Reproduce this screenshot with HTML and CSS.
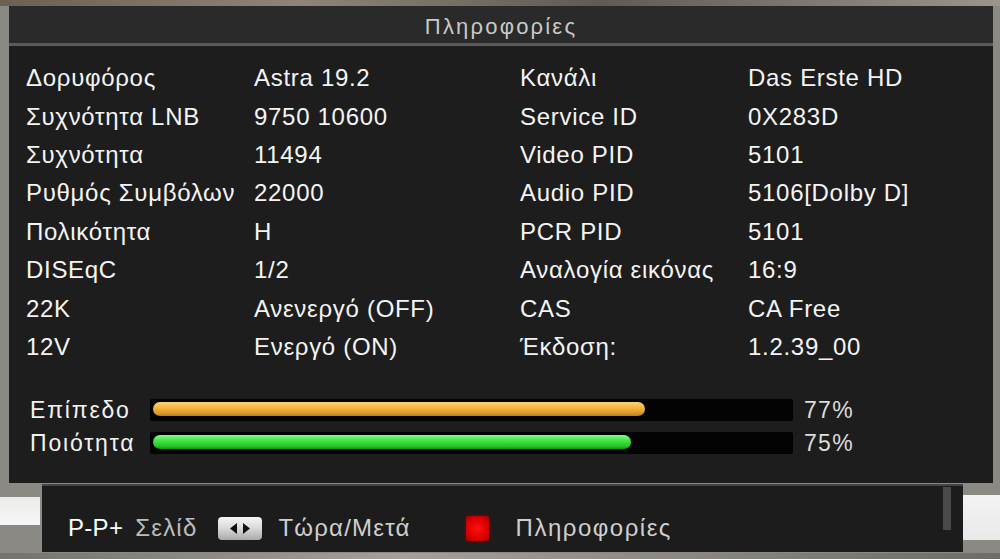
FILE: index.html
```html
<!DOCTYPE html>
<html lang="el">
<head>
<meta charset="utf-8">
<title>Πληροφορίες</title>
<link rel="stylesheet" href="styles.css">
</head>
<body>
<div class="screen">
  <div class="panel">
    <div class="title">Πληροφορίες</div>
    <div class="info">
      <span>Δορυφόρος</span><span>Astra 19.2</span><span>Κανάλι</span><span>Das Erste HD</span>
      <span>Συχνότητα LNB</span><span>9750 10600</span><span>Service ID</span><span>0X283D</span>
      <span>Συχνότητα</span><span>11494</span><span>Video PID</span><span>5101</span>
      <span>Ρυθμός Συμβόλων</span><span>22000</span><span>Audio PID</span><span>5106[Dolby D]</span>
      <span>Πολικότητα</span><span>H</span><span>PCR PID</span><span>5101</span>
      <span>DISEqC</span><span>1/2</span><span>Αναλογία εικόνας</span><span>16:9</span>
      <span>22K</span><span>Ανενεργό (OFF)</span><span>CAS</span><span>CA Free</span>
      <span>12V</span><span>Ενεργό (ON)</span><span>Έκδοση:</span><span>1.2.39_00</span>
    </div>
    <div class="signal">
      <div class="sig-row">
        <span class="sig-label">Επίπεδο</span>
        <div class="track"><div class="fill fill-level" style="width:77.2%"></div></div>
        <span class="pct">77%</span>
      </div>
      <div class="sig-row">
        <span class="sig-label">Ποιότητα</span>
        <div class="track"><div class="fill fill-quality" style="width:75%"></div></div>
        <span class="pct">75%</span>
      </div>
    </div>
  </div>
  <div class="footer">
    <span class="key">P-P+</span>
    <span class="hint hint-page">Σελίδ</span>
    <span class="arrows">
      <svg width="44" height="23" viewBox="0 0 44 23"><path d="M19 6 L12 11.5 L19 17 Z" fill="#111"/><path d="M25 6 L32 11.5 L25 17 Z" fill="#111"/></svg>
    </span>
    <span class="hint hint-now">Τώρα/Μετά</span>
    <span class="red-key"></span>
    <span class="hint hint-info">Πληροφορίες</span>
    <span class="scrollbar"></span>
  </div>
</div>
</body>
</html>
```
FILE: styles.css
```css
html, body {
  margin: 0;
  padding: 0;
}
body {
  width: 1000px;
  height: 559px;
  overflow: hidden;
  font-family: "Liberation Sans", Arial, sans-serif;
  background-color: #8b8984;
  background-image:
    linear-gradient(#ecebea, #f6f6f6),
    linear-gradient(#f3f3f3, #e9e9e9),
    linear-gradient(90deg, #75736e, #a3a09a 40%, #6e6c68),
    linear-gradient(90deg, #6d5f52, #8e8578 30%, #5f5a55 60%, #9a948c);
  background-repeat: no-repeat;
  background-size: 40px 28px, 37px 45px, 1000px 6px, 1000px 6px;
  background-position: 0 497px, 963px 495px, 0 553px, 0 0;
}
.screen {
  padding-top: 6px;
}
.panel {
  margin-left: 9px;
  width: 984px;
  height: 477px;
  background: #1d1d1d;
}
.title {
  height: 37px;
  line-height: 41px;
  background: #2a2a2a;
  border-bottom: 3px solid #5a5a5a;
  text-align: center;
  color: #c9c9c9;
  font-size: 22px;
  letter-spacing: 2.2px;
}
.info {
  display: grid;
  grid-template-columns: 228px 266px 228px 1fr;
  grid-auto-rows: 38.4px;
  align-items: center;
  padding: 13px 0 0 17px;
  color: #f4f4f4;
  font-size: 24px;
  letter-spacing: 0.7px;
}
.signal {
  margin-top: 33px;
  padding-left: 21px;
  display: flex;
  flex-direction: column;
  gap: 11px;
}
.sig-row {
  display: flex;
  align-items: center;
  height: 22px;
}
.sig-label {
  width: 120px;
  color: #f2f2f2;
  font-size: 23px;
  letter-spacing: 1.8px;
}
.track {
  width: 637px;
  height: 16px;
  padding: 3px;
  background: #030303;
  border-radius: 2px;
}
.fill {
  height: 14px;
  border-radius: 7px;
}
.fill-level {
  background: linear-gradient(#ffd27a, #f2b23c 45%, #d99a2a 80%, #b47c1c);
}
.fill-quality {
  background: linear-gradient(#7dff7d, #3fe03f 45%, #28c428 80%, #1a8f1a);
}
.pct {
  margin-left: 11px;
  color: #dcdcdc;
  font-size: 23px;
  letter-spacing: 1.3px;
}
.footer {
  position: relative;
  margin-left: 42px;
  width: 921px;
  height: 48px;
  margin-top: 1px;
  padding-top: 18px;
  border-top: 2px solid #454545;
  background: #1c1c1c;
  display: flex;
  align-items: center;
  color: #cfcfcf;
  font-size: 24px;
}
.key {
  margin-left: 26px;
  color: #ffffff;
  letter-spacing: 0.3px;
}
.hint-page {
  margin-left: 12px;
  color: #bdbdbd;
  letter-spacing: 1.2px;
}
.arrows {
  margin-left: 21px;
  width: 44px;
  height: 23px;
  border-radius: 4px;
  background: linear-gradient(#f6f6f6, #d8d8d8 50%, #a9a9a9);
  display: flex;
}
.hint-now {
  margin-left: 16px;
  letter-spacing: 1.2px;
}
.red-key {
  margin-left: 55px;
  width: 23px;
  height: 25px;
  border-radius: 2px;
  background: radial-gradient(circle at 50% 50%, #ff1010, #e00000 55%, #a00000);
  box-shadow: 0 0 3px #900000;
}
.hint-info {
  margin-left: 27px;
  letter-spacing: 1.5px;
}
.scrollbar {
  position: absolute;
  top: 1px;
  right: 12px;
  width: 8px;
  height: 43px;
  background: #4a4a4a;
}
```
